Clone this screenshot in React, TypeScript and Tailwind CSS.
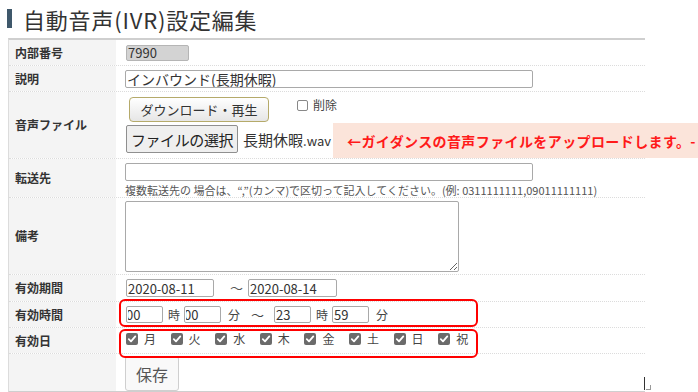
import React from "react";

const jp = { fontFamily: '"Noto Sans CJK JP", "Noto Sans", sans-serif' };

function Check({ label }: { label: string }) {
  return (
    <span className="flex items-center w-[44.6px] shrink-0">
      <span className="w-[12px] h-[12px] rounded-[2px] bg-[#6b6b6b] flex items-center justify-center">
        <svg width="10" height="10" viewBox="0 0 10 10">
          <path d="M1.8 5.2 L4 7.3 L8.3 2.4" stroke="#fff" strokeWidth="1.8" fill="none" strokeLinecap="round" strokeLinejoin="round" />
        </svg>
      </span>
      <span className="ml-[6px] text-[12px] text-[#444] leading-none">{label}</span>
    </span>
  );
}

function Row({ label, h, children, last }: { label: string; h: number; children?: React.ReactNode; last?: boolean }) {
  return (
    <div
      className={"flex " + (last ? "" : "border-b border-dotted border-[#dcdcdc]")}
      style={{ height: h }}
    >
      <div className="w-[107px] shrink-0 bg-[#f4f4f4] flex items-center pl-[6px] text-[12px] font-bold text-[#333]">
        {label}
      </div>
      <div className="flex-1 pl-[9px] flex flex-col justify-center">{children}</div>
    </div>
  );
}

const inputBase = "border border-[#a9a9a9] rounded-[2px] text-[13px] text-[#333] px-[1px] outline-none leading-none";
const inputCls = inputBase + " bg-white";

export default function App() {
  return (
    <div className="relative w-[698px] h-[392px] overflow-hidden bg-white" style={jp}>
      {/* title */}
      <div className="flex items-center h-[36px] pl-[7px] pt-[1px]">
        <span className="w-[5px] h-[19px] bg-[#3f586b]" />
        <span className="ml-[11px] text-[22px] text-[#333] tracking-[0.8px] leading-none">自動音声(IVR)設定編集</span>
      </div>

      {/* table */}
      <div className="ml-[8px] mt-[2px] w-[637px] border-t-2 border-[#cfcfcf] border-l border-l-[#dcdcdc] border-b-2 border-b-[#cfcfcf]">
        <Row label="内部番号" h={26}>
          <input className={inputBase + " w-[63px] h-[16px] bg-[#d3d3d3] text-[#8a8a8a] ml-[1px] border-[#b5b5b5]"} value="7990" readOnly disabled />
        </Row>
        <Row label="説明" h={26}>
          <input className={inputCls + " w-[408px] h-[18px] text-[14px]"} value="インバウンド(長期休暇)" readOnly />
        </Row>
        <Row label="音声ファイル" h={67}>
          <div className="flex items-start">
            <button className="ml-[4px] w-[140px] h-[25px] rounded-[4px] border border-[#b5aa6a] bg-gradient-to-b from-white to-[#e6e6e6] text-[13px] text-[#333] leading-none whitespace-nowrap">
              ダウンロード・再生
            </button>
            <span className="ml-[28px] mt-[2px] flex items-center">
              <span className="w-[11px] h-[11px] border border-[#888] rounded-[2px] bg-white" />
              <span className="ml-[5px] text-[12px] text-[#444] leading-none">削除</span>
            </span>
          </div>
          <div className="flex items-center mt-[3px]">
            <button className="ml-[1px] w-[112px] h-[28px] rounded-[2px] border border-[#8f8f8f] bg-[#efefef] text-[15px] tracking-[-0.4px] text-[#222] leading-none whitespace-nowrap">
              ファイルの選択
            </button>
            <span className="ml-[5px] text-[15px] text-[#333] leading-none whitespace-nowrap">
              長期休暇<span className="text-[13px]">.wav</span>
            </span>
          </div>
        </Row>
        <Row label="転送先" h={39}>
          <input className={inputCls + " w-[408px] h-[18px] mt-[2px]"} readOnly />
          <div className="text-[11px] text-[#555] leading-none mt-[4px] whitespace-nowrap">
            複数転送先の 場合は、“,”(カンマ)で区切って記入してください。(例: 0311111111,09011111111)
          </div>
        </Row>
        <Row label="備考" h={77}>
          <textarea className="w-[334px] h-[71px] border border-[#a9a9a9] rounded-[2px] bg-white outline-none" readOnly />
        </Row>
        <Row label="有効期間" h={27}>
          <div className="flex items-center">
            <input className={inputCls + " w-[88px] h-[18px] ml-[1px]"} value="2020-08-11" readOnly />
            <span className="ml-[16px] text-[13px] text-[#555]">～</span>
            <input className={inputCls + " w-[89px] h-[18px] ml-[5px]"} value="2020-08-14" readOnly />
          </div>
        </Row>
        <Row label="有効時間" h={26}>
          <div className="flex items-center text-[12px] text-[#444]">
            <input className={inputCls + " w-[37px] h-[17px] ml-[1px] indent-[-2px]"} value="00" readOnly />
            <span className="ml-[5px]">時</span>
            <input className={inputCls + " w-[37px] h-[17px] ml-[4px] indent-[-2px]"} value="00" readOnly />
            <span className="ml-[7px]">分</span>
            <span className="ml-[11px] text-[13px]">～</span>
            <input className={inputCls + " w-[37px] h-[17px] ml-[10px]"} value="23" readOnly />
            <span className="ml-[5px]">時</span>
            <input className={inputCls + " w-[37px] h-[17px] ml-[4px]"} value="59" readOnly />
            <span className="ml-[7px]">分</span>
          </div>
        </Row>
        <Row label="有効日" h={26}>
          <div className="flex items-center ml-[1px] -mt-[4px]">
            {["月", "火", "水", "木", "金", "土", "日", "祝"].map((d) => (
              <Check key={d} label={d} />
            ))}
          </div>
        </Row>
        <Row label="" h={37} last>
          <button className="w-[54px] h-[35px] mt-[2px] border border-[#cfcfcf] rounded-[3px] bg-[#f9f9f9] text-[16px] text-[#555] leading-none">
            保存
          </button>
        </Row>
      </div>

      {/* annotation */}
      <div className="absolute left-[333px] top-[123px] w-[400px] h-[35px] bg-[#fbe4da] flex items-center pl-[14px]">
        <span className="text-[14px] font-bold text-[#ff1a1a] whitespace-nowrap leading-none tracking-[0.4px]">
          ←ガイダンスの音声ファイルをアップロードします。-
        </span>
      </div>

      {/* red highlight boxes */}
      <div className="absolute left-[119px] top-[299px] w-[359px] h-[28px] border-[2.5px] border-[#ff0000] rounded-[6px]" />
      <div className="absolute left-[119px] top-[329px] w-[359px] h-[29px] border-[2.5px] border-[#ff0000] rounded-[6px]" />

      {/* cursor mark */}
      <div className="absolute left-[644px] top-[377px] w-[1px] h-[13px] bg-[#333]" />
      <div className="absolute left-[646px] top-[385px] w-[5px] h-[5px] border-r border-b border-[#999]" />
    </div>
  );
}
